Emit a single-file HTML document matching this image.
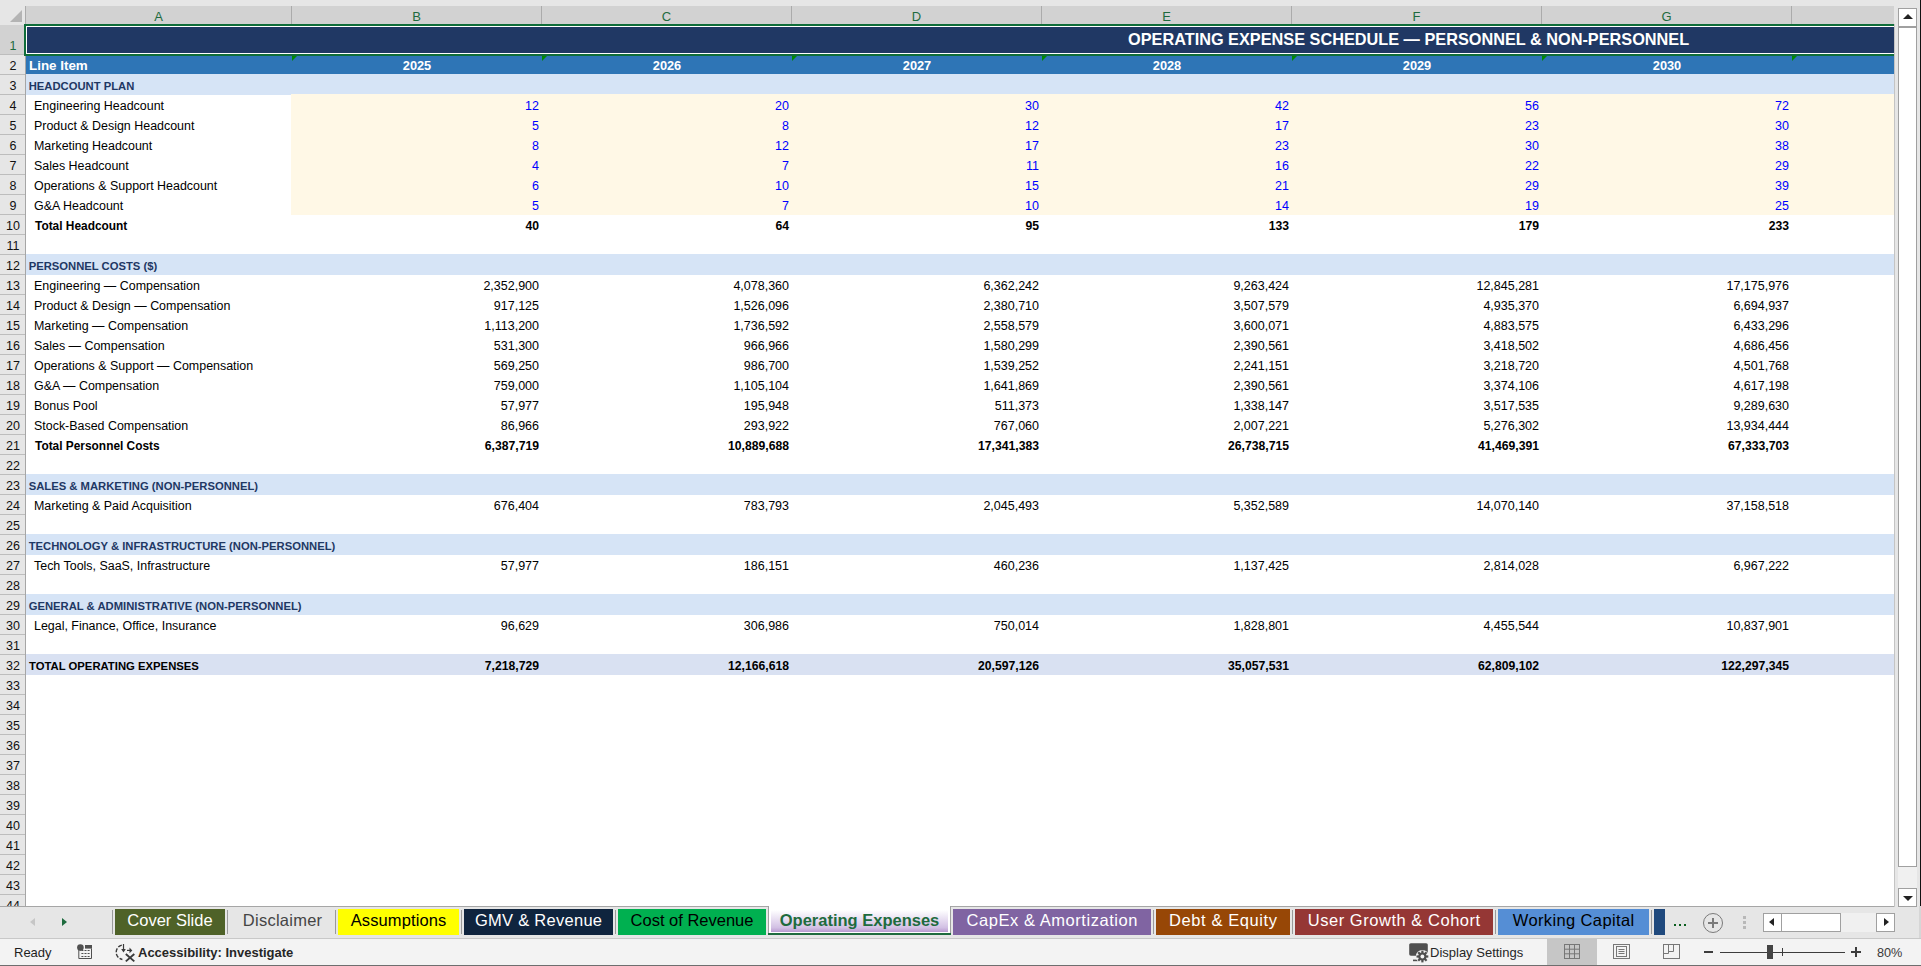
<!DOCTYPE html><html><head><meta charset="utf-8"><title>Operating Expenses</title><style>
*{box-sizing:border-box}
html,body{margin:0;padding:0}
body{width:1921px;height:966px;overflow:hidden;position:relative;background:#e6e6e6;font-family:"Liberation Sans",sans-serif;color:#000}
.a{position:absolute}
.t{position:absolute;white-space:nowrap;line-height:20px;height:20px}
.ch{position:absolute;top:6px;height:18px;background:#d2d2d2;color:#1e6b3e;font-size:13px;line-height:22px;text-align:center}
.rh{position:absolute;left:0;width:25px;padding-left:1px;height:20px;background:#e6e6e6;border-top:1px solid #bdbdbd;font-size:12.5px;line-height:22px;text-align:center;color:#111}
.n{font-size:12.5px}
.r{text-align:right}
.tab{position:absolute;top:909px;height:26px;font-size:16.5px;line-height:22px;white-space:nowrap;text-align:center}
.sep{position:absolute;top:910px;width:1px;height:24px;background:#9a9a9a}

</style></head><body>
<div class="a" style="left:0;top:6px;width:25px;height:18px;background:#e6e6e6"></div>
<div class="a" style="left:10px;top:10px;width:0;height:0;border-left:12px solid transparent;border-bottom:12px solid #b4b4b4"></div>
<div class="ch" style="left:26px;width:265px">A</div>
<div class="a" style="left:25px;top:6px;width:1px;height:18px;background:#ababab"></div>
<div class="ch" style="left:292px;width:249px">B</div>
<div class="a" style="left:291px;top:6px;width:1px;height:18px;background:#ababab"></div>
<div class="ch" style="left:542px;width:249px">C</div>
<div class="a" style="left:541px;top:6px;width:1px;height:18px;background:#ababab"></div>
<div class="ch" style="left:792px;width:249px">D</div>
<div class="a" style="left:791px;top:6px;width:1px;height:18px;background:#ababab"></div>
<div class="ch" style="left:1042px;width:249px">E</div>
<div class="a" style="left:1041px;top:6px;width:1px;height:18px;background:#ababab"></div>
<div class="ch" style="left:1292px;width:249px">F</div>
<div class="a" style="left:1291px;top:6px;width:1px;height:18px;background:#ababab"></div>
<div class="ch" style="left:1542px;width:249px">G</div>
<div class="a" style="left:1541px;top:6px;width:1px;height:18px;background:#ababab"></div>
<div class="ch" style="left:1792px;width:102px"></div>
<div class="a" style="left:1791px;top:6px;width:1px;height:18px;background:#ababab"></div>
<div class="a" style="left:26px;top:24px;width:1868px;height:882px;background:#fff"></div>
<div class="a" style="left:0;top:24px;width:25px;height:882px;background:#e6e6e6;overflow:hidden">
<div class="rh" style="top:1px;height:30px;background:#d2d2d2;border-top:none;color:#1e6b3e;line-height:42px">1</div>
<div class="rh" style="top:30px">2</div>
<div class="rh" style="top:50px">3</div>
<div class="rh" style="top:70px">4</div>
<div class="rh" style="top:90px">5</div>
<div class="rh" style="top:110px">6</div>
<div class="rh" style="top:130px">7</div>
<div class="rh" style="top:150px">8</div>
<div class="rh" style="top:170px">9</div>
<div class="rh" style="top:190px">10</div>
<div class="rh" style="top:210px">11</div>
<div class="rh" style="top:230px">12</div>
<div class="rh" style="top:250px">13</div>
<div class="rh" style="top:270px">14</div>
<div class="rh" style="top:290px">15</div>
<div class="rh" style="top:310px">16</div>
<div class="rh" style="top:330px">17</div>
<div class="rh" style="top:350px">18</div>
<div class="rh" style="top:370px">19</div>
<div class="rh" style="top:390px">20</div>
<div class="rh" style="top:410px">21</div>
<div class="rh" style="top:430px">22</div>
<div class="rh" style="top:450px">23</div>
<div class="rh" style="top:470px">24</div>
<div class="rh" style="top:490px">25</div>
<div class="rh" style="top:510px">26</div>
<div class="rh" style="top:530px">27</div>
<div class="rh" style="top:550px">28</div>
<div class="rh" style="top:570px">29</div>
<div class="rh" style="top:590px">30</div>
<div class="rh" style="top:610px">31</div>
<div class="rh" style="top:630px">32</div>
<div class="rh" style="top:650px">33</div>
<div class="rh" style="top:670px">34</div>
<div class="rh" style="top:690px">35</div>
<div class="rh" style="top:710px">36</div>
<div class="rh" style="top:730px">37</div>
<div class="rh" style="top:750px">38</div>
<div class="rh" style="top:770px">39</div>
<div class="rh" style="top:790px">40</div>
<div class="rh" style="top:810px">41</div>
<div class="rh" style="top:830px">42</div>
<div class="rh" style="top:850px">43</div>
<div class="rh" style="top:870px">44</div>
</div>
<div class="a" style="left:25px;top:24px;width:1px;height:882px;background:#a6a6a6"></div>
<div class="a" style="left:26px;top:25px;width:1868px;height:30px;background:#203864"></div>
<div class="a" style="left:26px;top:54px;width:1868px;height:20px;background:#2e75b6"></div>
<div class="a" style="left:26px;top:74px;width:1868px;height:21px;background:#d6e4f6"></div>
<div class="a" style="left:26px;top:254px;width:1868px;height:21px;background:#d6e4f6"></div>
<div class="a" style="left:26px;top:474px;width:1868px;height:21px;background:#d6e4f6"></div>
<div class="a" style="left:26px;top:534px;width:1868px;height:21px;background:#d6e4f6"></div>
<div class="a" style="left:26px;top:594px;width:1868px;height:21px;background:#d6e4f6"></div>
<div class="a" style="left:26px;top:654px;width:1868px;height:21px;background:#d9e1f2"></div>
<div class="a" style="left:291px;top:94px;width:1603px;height:121px;background:#fff8e6"></div>
<div class="a" style="left:24px;top:24px;width:1870px;height:2px;background:#0f6d3a"></div>
<div class="a" style="left:24px;top:54px;width:1870px;height:2px;background:#0f6d3a"></div>
<div class="a" style="left:24px;top:24px;width:2px;height:32px;background:#0f6d3a"></div>
<div class="a" style="left:26px;top:26px;width:1868px;height:1px;background:#fff"></div>
<div class="a" style="left:26px;top:53px;width:1868px;height:1px;background:#fff"></div>
<div class="a" style="left:26px;top:26px;width:1px;height:28px;background:#fff"></div>
<div class="t" style="left:1128px;top:29px;font-size:16.3px;font-weight:bold;color:#fff;line-height:20px">OPERATING EXPENSE SCHEDULE — PERSONNEL &amp; NON-PERSONNEL</div>
<div class="t" style="left:29px;top:56px;font-size:13.4px;font-weight:bold;color:#fff">Line Item</div>
<div class="t" style="left:292px;width:250px;top:56px;font-size:12.8px;font-weight:bold;color:#fff;text-align:center">2025</div>
<div class="t" style="left:542px;width:250px;top:56px;font-size:12.8px;font-weight:bold;color:#fff;text-align:center">2026</div>
<div class="t" style="left:792px;width:250px;top:56px;font-size:12.8px;font-weight:bold;color:#fff;text-align:center">2027</div>
<div class="t" style="left:1042px;width:250px;top:56px;font-size:12.8px;font-weight:bold;color:#fff;text-align:center">2028</div>
<div class="t" style="left:1292px;width:250px;top:56px;font-size:12.8px;font-weight:bold;color:#fff;text-align:center">2029</div>
<div class="t" style="left:1542px;width:250px;top:56px;font-size:12.8px;font-weight:bold;color:#fff;text-align:center">2030</div>
<div class="a" style="left:292px;top:56px;width:0;height:0;border-top:5px solid #008a00;border-right:5px solid transparent"></div>
<div class="a" style="left:542px;top:56px;width:0;height:0;border-top:5px solid #008a00;border-right:5px solid transparent"></div>
<div class="a" style="left:792px;top:56px;width:0;height:0;border-top:5px solid #008a00;border-right:5px solid transparent"></div>
<div class="a" style="left:1042px;top:56px;width:0;height:0;border-top:5px solid #008a00;border-right:5px solid transparent"></div>
<div class="a" style="left:1292px;top:56px;width:0;height:0;border-top:5px solid #008a00;border-right:5px solid transparent"></div>
<div class="a" style="left:1542px;top:56px;width:0;height:0;border-top:5px solid #008a00;border-right:5px solid transparent"></div>
<div class="a" style="left:1792px;top:56px;width:0;height:0;border-top:5px solid #008a00;border-right:5px solid transparent"></div>
<div class="t" style="left:28.7px;top:76px;font-size:11.25px;font-weight:bold;color:#1f3864">HEADCOUNT PLAN</div>
<div class="t" style="left:34px;top:96px;font-size:12.45px">Engineering Headcount</div>
<div class="t r" style="left:341px;width:198px;top:96px;font-size:12.5px;color:#0000ff">12</div>
<div class="t r" style="left:591px;width:198px;top:96px;font-size:12.5px;color:#0000ff">20</div>
<div class="t r" style="left:841px;width:198px;top:96px;font-size:12.5px;color:#0000ff">30</div>
<div class="t r" style="left:1091px;width:198px;top:96px;font-size:12.5px;color:#0000ff">42</div>
<div class="t r" style="left:1341px;width:198px;top:96px;font-size:12.5px;color:#0000ff">56</div>
<div class="t r" style="left:1591px;width:198px;top:96px;font-size:12.5px;color:#0000ff">72</div>
<div class="t" style="left:34px;top:116px;font-size:12.45px">Product &amp; Design Headcount</div>
<div class="t r" style="left:341px;width:198px;top:116px;font-size:12.5px;color:#0000ff">5</div>
<div class="t r" style="left:591px;width:198px;top:116px;font-size:12.5px;color:#0000ff">8</div>
<div class="t r" style="left:841px;width:198px;top:116px;font-size:12.5px;color:#0000ff">12</div>
<div class="t r" style="left:1091px;width:198px;top:116px;font-size:12.5px;color:#0000ff">17</div>
<div class="t r" style="left:1341px;width:198px;top:116px;font-size:12.5px;color:#0000ff">23</div>
<div class="t r" style="left:1591px;width:198px;top:116px;font-size:12.5px;color:#0000ff">30</div>
<div class="t" style="left:34px;top:136px;font-size:12.45px">Marketing Headcount</div>
<div class="t r" style="left:341px;width:198px;top:136px;font-size:12.5px;color:#0000ff">8</div>
<div class="t r" style="left:591px;width:198px;top:136px;font-size:12.5px;color:#0000ff">12</div>
<div class="t r" style="left:841px;width:198px;top:136px;font-size:12.5px;color:#0000ff">17</div>
<div class="t r" style="left:1091px;width:198px;top:136px;font-size:12.5px;color:#0000ff">23</div>
<div class="t r" style="left:1341px;width:198px;top:136px;font-size:12.5px;color:#0000ff">30</div>
<div class="t r" style="left:1591px;width:198px;top:136px;font-size:12.5px;color:#0000ff">38</div>
<div class="t" style="left:34px;top:156px;font-size:12.45px">Sales Headcount</div>
<div class="t r" style="left:341px;width:198px;top:156px;font-size:12.5px;color:#0000ff">4</div>
<div class="t r" style="left:591px;width:198px;top:156px;font-size:12.5px;color:#0000ff">7</div>
<div class="t r" style="left:841px;width:198px;top:156px;font-size:12.5px;color:#0000ff">11</div>
<div class="t r" style="left:1091px;width:198px;top:156px;font-size:12.5px;color:#0000ff">16</div>
<div class="t r" style="left:1341px;width:198px;top:156px;font-size:12.5px;color:#0000ff">22</div>
<div class="t r" style="left:1591px;width:198px;top:156px;font-size:12.5px;color:#0000ff">29</div>
<div class="t" style="left:34px;top:176px;font-size:12.45px">Operations &amp; Support Headcount</div>
<div class="t r" style="left:341px;width:198px;top:176px;font-size:12.5px;color:#0000ff">6</div>
<div class="t r" style="left:591px;width:198px;top:176px;font-size:12.5px;color:#0000ff">10</div>
<div class="t r" style="left:841px;width:198px;top:176px;font-size:12.5px;color:#0000ff">15</div>
<div class="t r" style="left:1091px;width:198px;top:176px;font-size:12.5px;color:#0000ff">21</div>
<div class="t r" style="left:1341px;width:198px;top:176px;font-size:12.5px;color:#0000ff">29</div>
<div class="t r" style="left:1591px;width:198px;top:176px;font-size:12.5px;color:#0000ff">39</div>
<div class="t" style="left:34px;top:196px;font-size:12.45px">G&amp;A Headcount</div>
<div class="t r" style="left:341px;width:198px;top:196px;font-size:12.5px;color:#0000ff">5</div>
<div class="t r" style="left:591px;width:198px;top:196px;font-size:12.5px;color:#0000ff">7</div>
<div class="t r" style="left:841px;width:198px;top:196px;font-size:12.5px;color:#0000ff">10</div>
<div class="t r" style="left:1091px;width:198px;top:196px;font-size:12.5px;color:#0000ff">14</div>
<div class="t r" style="left:1341px;width:198px;top:196px;font-size:12.5px;color:#0000ff">19</div>
<div class="t r" style="left:1591px;width:198px;top:196px;font-size:12.5px;color:#0000ff">25</div>
<div class="t" style="left:35px;top:216px;font-size:11.9px;font-weight:bold">Total Headcount</div>
<div class="t r" style="left:341px;width:198px;top:216px;font-size:12.2px;font-weight:bold">40</div>
<div class="t r" style="left:591px;width:198px;top:216px;font-size:12.2px;font-weight:bold">64</div>
<div class="t r" style="left:841px;width:198px;top:216px;font-size:12.2px;font-weight:bold">95</div>
<div class="t r" style="left:1091px;width:198px;top:216px;font-size:12.2px;font-weight:bold">133</div>
<div class="t r" style="left:1341px;width:198px;top:216px;font-size:12.2px;font-weight:bold">179</div>
<div class="t r" style="left:1591px;width:198px;top:216px;font-size:12.2px;font-weight:bold">233</div>
<div class="t" style="left:28.7px;top:256px;font-size:11.25px;font-weight:bold;color:#1f3864">PERSONNEL COSTS ($)</div>
<div class="t" style="left:34px;top:276px;font-size:12.45px">Engineering — Compensation</div>
<div class="t r" style="left:341px;width:198px;top:276px;font-size:12.5px">2,352,900</div>
<div class="t r" style="left:591px;width:198px;top:276px;font-size:12.5px">4,078,360</div>
<div class="t r" style="left:841px;width:198px;top:276px;font-size:12.5px">6,362,242</div>
<div class="t r" style="left:1091px;width:198px;top:276px;font-size:12.5px">9,263,424</div>
<div class="t r" style="left:1341px;width:198px;top:276px;font-size:12.5px">12,845,281</div>
<div class="t r" style="left:1591px;width:198px;top:276px;font-size:12.5px">17,175,976</div>
<div class="t" style="left:34px;top:296px;font-size:12.45px">Product &amp; Design — Compensation</div>
<div class="t r" style="left:341px;width:198px;top:296px;font-size:12.5px">917,125</div>
<div class="t r" style="left:591px;width:198px;top:296px;font-size:12.5px">1,526,096</div>
<div class="t r" style="left:841px;width:198px;top:296px;font-size:12.5px">2,380,710</div>
<div class="t r" style="left:1091px;width:198px;top:296px;font-size:12.5px">3,507,579</div>
<div class="t r" style="left:1341px;width:198px;top:296px;font-size:12.5px">4,935,370</div>
<div class="t r" style="left:1591px;width:198px;top:296px;font-size:12.5px">6,694,937</div>
<div class="t" style="left:34px;top:316px;font-size:12.45px">Marketing — Compensation</div>
<div class="t r" style="left:341px;width:198px;top:316px;font-size:12.5px">1,113,200</div>
<div class="t r" style="left:591px;width:198px;top:316px;font-size:12.5px">1,736,592</div>
<div class="t r" style="left:841px;width:198px;top:316px;font-size:12.5px">2,558,579</div>
<div class="t r" style="left:1091px;width:198px;top:316px;font-size:12.5px">3,600,071</div>
<div class="t r" style="left:1341px;width:198px;top:316px;font-size:12.5px">4,883,575</div>
<div class="t r" style="left:1591px;width:198px;top:316px;font-size:12.5px">6,433,296</div>
<div class="t" style="left:34px;top:336px;font-size:12.45px">Sales — Compensation</div>
<div class="t r" style="left:341px;width:198px;top:336px;font-size:12.5px">531,300</div>
<div class="t r" style="left:591px;width:198px;top:336px;font-size:12.5px">966,966</div>
<div class="t r" style="left:841px;width:198px;top:336px;font-size:12.5px">1,580,299</div>
<div class="t r" style="left:1091px;width:198px;top:336px;font-size:12.5px">2,390,561</div>
<div class="t r" style="left:1341px;width:198px;top:336px;font-size:12.5px">3,418,502</div>
<div class="t r" style="left:1591px;width:198px;top:336px;font-size:12.5px">4,686,456</div>
<div class="t" style="left:34px;top:356px;font-size:12.45px">Operations &amp; Support — Compensation</div>
<div class="t r" style="left:341px;width:198px;top:356px;font-size:12.5px">569,250</div>
<div class="t r" style="left:591px;width:198px;top:356px;font-size:12.5px">986,700</div>
<div class="t r" style="left:841px;width:198px;top:356px;font-size:12.5px">1,539,252</div>
<div class="t r" style="left:1091px;width:198px;top:356px;font-size:12.5px">2,241,151</div>
<div class="t r" style="left:1341px;width:198px;top:356px;font-size:12.5px">3,218,720</div>
<div class="t r" style="left:1591px;width:198px;top:356px;font-size:12.5px">4,501,768</div>
<div class="t" style="left:34px;top:376px;font-size:12.45px">G&amp;A — Compensation</div>
<div class="t r" style="left:341px;width:198px;top:376px;font-size:12.5px">759,000</div>
<div class="t r" style="left:591px;width:198px;top:376px;font-size:12.5px">1,105,104</div>
<div class="t r" style="left:841px;width:198px;top:376px;font-size:12.5px">1,641,869</div>
<div class="t r" style="left:1091px;width:198px;top:376px;font-size:12.5px">2,390,561</div>
<div class="t r" style="left:1341px;width:198px;top:376px;font-size:12.5px">3,374,106</div>
<div class="t r" style="left:1591px;width:198px;top:376px;font-size:12.5px">4,617,198</div>
<div class="t" style="left:34px;top:396px;font-size:12.45px">Bonus Pool</div>
<div class="t r" style="left:341px;width:198px;top:396px;font-size:12.5px">57,977</div>
<div class="t r" style="left:591px;width:198px;top:396px;font-size:12.5px">195,948</div>
<div class="t r" style="left:841px;width:198px;top:396px;font-size:12.5px">511,373</div>
<div class="t r" style="left:1091px;width:198px;top:396px;font-size:12.5px">1,338,147</div>
<div class="t r" style="left:1341px;width:198px;top:396px;font-size:12.5px">3,517,535</div>
<div class="t r" style="left:1591px;width:198px;top:396px;font-size:12.5px">9,289,630</div>
<div class="t" style="left:34px;top:416px;font-size:12.45px">Stock-Based Compensation</div>
<div class="t r" style="left:341px;width:198px;top:416px;font-size:12.5px">86,966</div>
<div class="t r" style="left:591px;width:198px;top:416px;font-size:12.5px">293,922</div>
<div class="t r" style="left:841px;width:198px;top:416px;font-size:12.5px">767,060</div>
<div class="t r" style="left:1091px;width:198px;top:416px;font-size:12.5px">2,007,221</div>
<div class="t r" style="left:1341px;width:198px;top:416px;font-size:12.5px">5,276,302</div>
<div class="t r" style="left:1591px;width:198px;top:416px;font-size:12.5px">13,934,444</div>
<div class="t" style="left:35px;top:436px;font-size:11.9px;font-weight:bold">Total Personnel Costs</div>
<div class="t r" style="left:341px;width:198px;top:436px;font-size:12.2px;font-weight:bold">6,387,719</div>
<div class="t r" style="left:591px;width:198px;top:436px;font-size:12.2px;font-weight:bold">10,889,688</div>
<div class="t r" style="left:841px;width:198px;top:436px;font-size:12.2px;font-weight:bold">17,341,383</div>
<div class="t r" style="left:1091px;width:198px;top:436px;font-size:12.2px;font-weight:bold">26,738,715</div>
<div class="t r" style="left:1341px;width:198px;top:436px;font-size:12.2px;font-weight:bold">41,469,391</div>
<div class="t r" style="left:1591px;width:198px;top:436px;font-size:12.2px;font-weight:bold">67,333,703</div>
<div class="t" style="left:28.7px;top:476px;font-size:11.25px;font-weight:bold;color:#1f3864">SALES &amp; MARKETING (NON-PERSONNEL)</div>
<div class="t" style="left:34px;top:496px;font-size:12.45px">Marketing &amp; Paid Acquisition</div>
<div class="t r" style="left:341px;width:198px;top:496px;font-size:12.5px">676,404</div>
<div class="t r" style="left:591px;width:198px;top:496px;font-size:12.5px">783,793</div>
<div class="t r" style="left:841px;width:198px;top:496px;font-size:12.5px">2,045,493</div>
<div class="t r" style="left:1091px;width:198px;top:496px;font-size:12.5px">5,352,589</div>
<div class="t r" style="left:1341px;width:198px;top:496px;font-size:12.5px">14,070,140</div>
<div class="t r" style="left:1591px;width:198px;top:496px;font-size:12.5px">37,158,518</div>
<div class="t" style="left:28.7px;top:536px;font-size:11.25px;font-weight:bold;color:#1f3864">TECHNOLOGY &amp; INFRASTRUCTURE (NON-PERSONNEL)</div>
<div class="t" style="left:34px;top:556px;font-size:12.45px">Tech Tools, SaaS, Infrastructure</div>
<div class="t r" style="left:341px;width:198px;top:556px;font-size:12.5px">57,977</div>
<div class="t r" style="left:591px;width:198px;top:556px;font-size:12.5px">186,151</div>
<div class="t r" style="left:841px;width:198px;top:556px;font-size:12.5px">460,236</div>
<div class="t r" style="left:1091px;width:198px;top:556px;font-size:12.5px">1,137,425</div>
<div class="t r" style="left:1341px;width:198px;top:556px;font-size:12.5px">2,814,028</div>
<div class="t r" style="left:1591px;width:198px;top:556px;font-size:12.5px">6,967,222</div>
<div class="t" style="left:28.7px;top:596px;font-size:11.25px;font-weight:bold;color:#1f3864">GENERAL &amp; ADMINISTRATIVE (NON-PERSONNEL)</div>
<div class="t" style="left:34px;top:616px;font-size:12.45px">Legal, Finance, Office, Insurance</div>
<div class="t r" style="left:341px;width:198px;top:616px;font-size:12.5px">96,629</div>
<div class="t r" style="left:591px;width:198px;top:616px;font-size:12.5px">306,986</div>
<div class="t r" style="left:841px;width:198px;top:616px;font-size:12.5px">750,014</div>
<div class="t r" style="left:1091px;width:198px;top:616px;font-size:12.5px">1,828,801</div>
<div class="t r" style="left:1341px;width:198px;top:616px;font-size:12.5px">4,455,544</div>
<div class="t r" style="left:1591px;width:198px;top:616px;font-size:12.5px">10,837,901</div>
<div class="t" style="left:29px;top:656px;font-size:11.3px;font-weight:bold">TOTAL OPERATING EXPENSES</div>
<div class="t r" style="left:341px;width:198px;top:656px;font-size:12.2px;font-weight:bold">7,218,729</div>
<div class="t r" style="left:591px;width:198px;top:656px;font-size:12.2px;font-weight:bold">12,166,618</div>
<div class="t r" style="left:841px;width:198px;top:656px;font-size:12.2px;font-weight:bold">20,597,126</div>
<div class="t r" style="left:1091px;width:198px;top:656px;font-size:12.2px;font-weight:bold">35,057,531</div>
<div class="t r" style="left:1341px;width:198px;top:656px;font-size:12.2px;font-weight:bold">62,809,102</div>
<div class="t r" style="left:1591px;width:198px;top:656px;font-size:12.2px;font-weight:bold">122,297,345</div>
<div class="a" style="left:0;top:906px;width:1894px;height:1px;background:#a6a6a6"></div>
<div class="a" style="left:1894px;top:24px;width:1px;height:883px;background:#c4c4c4"></div>
<div class="a" style="left:1898px;top:8px;width:19px;height:19px;background:#fff;border:1px solid #a0a0a0"></div>
<div class="a" style="left:1903px;top:14px;width:0;height:0;border-left:5px solid transparent;border-right:5px solid transparent;border-bottom:5px solid #222"></div>
<div class="a" style="left:1898px;top:27px;width:19px;height:840px;background:#fff;border:1px solid #a0a0a0"></div>
<div class="a" style="left:1898px;top:867px;width:19px;height:21px;background:#f0f0f0"></div>
<div class="a" style="left:1898px;top:888px;width:19px;height:19px;background:#fff;border:1px solid #a0a0a0"></div>
<div class="a" style="left:1903px;top:896px;width:0;height:0;border-left:5px solid transparent;border-right:5px solid transparent;border-top:5px solid #222"></div>
<div class="a" style="left:1920px;top:0;width:1px;height:906px;background:#111"></div>
<div class="a" style="left:1919px;top:906px;width:2px;height:60px;background:#d6d6d6"></div>
<div class="a" style="left:0;top:938px;width:1921px;height:1px;background:#c8c8c8"></div>
<div class="a" style="left:30px;top:918px;width:0;height:0;border-top:4.5px solid transparent;border-bottom:4.5px solid transparent;border-right:5px solid #c6c6c6"></div>
<div class="a" style="left:62px;top:918px;width:0;height:0;border-top:4.5px solid transparent;border-bottom:4.5px solid transparent;border-left:5px solid #1e6b3e"></div>
<div class="tab" style="left:115px;width:110px;background:#4f6228;color:#ffffff;letter-spacing:0px;text-indent:0px">Cover Slide</div>
<div class="tab" style="left:229px;width:107px;color:#444444;letter-spacing:0.25px;text-indent:0.25px">Disclaimer</div>
<div class="tab" style="left:338px;width:121px;background:#ffff00;color:#000000;letter-spacing:0.1px;text-indent:0.1px">Assumptions</div>
<div class="tab" style="left:464px;width:149px;background:#0f243e;color:#ffffff;letter-spacing:0.27px;text-indent:0.27px">GMV &amp; Revenue</div>
<div class="tab" style="left:618px;width:148px;background:#00b050;color:#000000;letter-spacing:0px;text-indent:0px">Cost of Revenue</div>
<div class="tab" style="left:953px;width:198px;background:#8064a2;color:#ffffff;letter-spacing:0.55px;text-indent:0.55px">CapEx &amp; Amortization</div>
<div class="tab" style="left:1156px;width:134px;background:#974706;color:#ffffff;letter-spacing:0.6px;text-indent:0.6px">Debt &amp; Equity</div>
<div class="tab" style="left:1295px;width:198px;background:#953735;color:#ffffff;letter-spacing:0.53px;text-indent:0.53px">User Growth &amp; Cohort</div>
<div class="tab" style="left:1498px;width:151px;background:#558ed5;color:#000000;letter-spacing:0.37px;text-indent:0.37px">Working Capital</div>
<div class="sep" style="left:112px"></div>
<div class="sep" style="left:227px"></div>
<div class="sep" style="left:335px"></div>
<div class="sep" style="left:461px"></div>
<div class="sep" style="left:615px"></div>
<div class="sep" style="left:1153px"></div>
<div class="sep" style="left:1292px"></div>
<div class="sep" style="left:1495px"></div>
<div class="sep" style="left:1651px"></div>
<div class="a" style="left:768px;top:906px;width:183px;height:29px;background:#fff;border-left:1px solid #a0a0a0;border-right:1px solid #a0a0a0"></div>
<div class="a" style="left:771px;top:910px;width:177px;height:22px;background:linear-gradient(#ffffff 0%,#e9e0f2 40%,#d2c0e4 80%,#b89ad0 100%)"></div>
<div class="a" style="left:768px;top:933px;width:183px;height:2px;background:#1e6b3e"></div>
<div class="tab" style="left:769px;width:181px;top:909px;color:#1e6b3e;font-weight:bold">Operating Expenses</div>
<div class="a" style="left:1654px;top:909px;width:11px;height:26px;background:#1f497d"></div>
<div class="a" style="left:1674px;top:924px;width:2px;height:2px;background:#0a5e1e"></div>
<div class="a" style="left:1679px;top:924px;width:2px;height:2px;background:#0a5e1e"></div>
<div class="a" style="left:1684px;top:924px;width:2px;height:2px;background:#0a5e1e"></div>
<div class="a" style="left:1703px;top:913px;width:20px;height:20px;border:1.3px solid #7a7a7a;border-radius:50%"></div>
<div class="a" style="left:1708px;top:922px;width:10px;height:2px;background:#7a7a7a"></div>
<div class="a" style="left:1712px;top:918px;width:2px;height:10px;background:#7a7a7a"></div>
<div class="a" style="left:1743px;top:916px;width:3px;height:3px;background:#b8b8b8"></div>
<div class="a" style="left:1743px;top:921px;width:3px;height:3px;background:#b8b8b8"></div>
<div class="a" style="left:1743px;top:926px;width:3px;height:3px;background:#b8b8b8"></div>
<div class="a" style="left:1763px;top:913px;width:131px;height:19px;background:#f0f0f0"></div>
<div class="a" style="left:1763px;top:913px;width:19px;height:19px;background:#fff;border:1px solid #a0a0a0"></div>
<div class="a" style="left:1769px;top:918px;width:0;height:0;border-top:4.5px solid transparent;border-bottom:4.5px solid transparent;border-right:5px solid #222"></div>
<div class="a" style="left:1781px;top:913px;width:60px;height:19px;background:#fff;border:1px solid #a0a0a0"></div>
<div class="a" style="left:1876px;top:913px;width:19px;height:19px;background:#fff;border:1px solid #a0a0a0"></div>
<div class="a" style="left:1884px;top:918px;width:0;height:0;border-top:4.5px solid transparent;border-bottom:4.5px solid transparent;border-left:5px solid #222"></div>
<div class="a" style="left:0;top:939px;width:1921px;height:27px;background:#f3f3f3"></div>
<div class="a" style="left:0;top:965px;width:1921px;height:1px;background:#6e6e6e"></div>
<div class="a" style="left:14px;top:943px;font-size:13px;line-height:20px;color:#1e1e1e">Ready</div>
<svg class="a" style="left:76px;top:943px" width="18" height="17" viewBox="76 943 18 17"><g fill="#505050"><circle cx="80.4" cy="947.6" r="3.3"/><rect x="85" y="945" width="7" height="3.6"/><rect x="81.4" y="950" width="2" height="1"/><rect x="84.5" y="950" width="2" height="1"/><rect x="87.6" y="950" width="2" height="1"/><rect x="81.4" y="953" width="2" height="1"/><rect x="84.5" y="953" width="2" height="1"/><rect x="87.6" y="953" width="2" height="1"/><rect x="81.4" y="956" width="2" height="1"/><rect x="84.5" y="956" width="2" height="1"/><rect x="87.6" y="956" width="2" height="1"/></g><path d="M78.8 949.5V958.5H91.5V948.5" fill="none" stroke="#505050" stroke-width="1"/></svg>
<svg class="a" style="left:110px;top:940px" width="30" height="26" viewBox="110 940 30 26"><path d="M121.8 945.1 A7.35 7.35 0 0 0 122.4 959.5" fill="none" stroke="#3a3a3a" stroke-width="1.4" stroke-dasharray="4 1.6"/><path d="M123.5 944V951" fill="none" stroke="#3a3a3a" stroke-width="1.2"/><path d="M121.2 949H125.8L123.5 952.6Z" fill="#3a3a3a"/><path d="M127 950.4H130" fill="none" stroke="#3a3a3a" stroke-width="1.2"/><path d="M129.5 947.6V953.2L132.3 950.4Z" fill="#3a3a3a"/><path d="M125.8 954L134.3 961.4M125.8 961.4L134.3 954" fill="none" stroke="#3a3a3a" stroke-width="1.9"/></svg>
<div class="a" style="left:138px;top:943px;font-size:13px;line-height:20px;font-weight:bold;color:#262626">Accessibility: Investigate</div>
<svg class="a" style="left:1405px;top:940px" width="28" height="26" viewBox="1405 940 28 26"><rect x="1409.2" y="943.2" width="18.6" height="12.5" rx="1.6" fill="#4f4f4f"/><rect x="1413" y="959.6" width="4.8" height="1.6" fill="#4f4f4f"/><circle cx="1422.4" cy="956.5" r="6.6" fill="#f3f3f3"/><g fill="#4f4f4f"><circle cx="1422.4" cy="956.5" r="4.1"/><rect x="1421.3" y="950.6" width="2.2" height="3" transform="rotate(0 1422.4 956.5)"/><rect x="1421.3" y="950.6" width="2.2" height="3" transform="rotate(45 1422.4 956.5)"/><rect x="1421.3" y="950.6" width="2.2" height="3" transform="rotate(90 1422.4 956.5)"/><rect x="1421.3" y="950.6" width="2.2" height="3" transform="rotate(135 1422.4 956.5)"/><rect x="1421.3" y="950.6" width="2.2" height="3" transform="rotate(180 1422.4 956.5)"/><rect x="1421.3" y="950.6" width="2.2" height="3" transform="rotate(225 1422.4 956.5)"/><rect x="1421.3" y="950.6" width="2.2" height="3" transform="rotate(270 1422.4 956.5)"/><rect x="1421.3" y="950.6" width="2.2" height="3" transform="rotate(315 1422.4 956.5)"/></g><circle cx="1422.4" cy="956.5" r="1.9" fill="#f3f3f3"/></svg>
<div class="a" style="left:1430px;top:943px;font-size:13px;line-height:20px;color:#262626">Display Settings</div>
<div class="a" style="left:1547px;top:939px;width:50px;height:26px;background:#c6c6c6"></div>
<svg class="a" style="left:1563px;top:943px" width="18" height="17" viewBox="0 0 18 17"><g fill="none" stroke="#777" stroke-width="1"><rect x="1.5" y="1.5" width="15" height="14"/><path d="M6.5 1.5V15.5M11.5 1.5V15.5M1.5 6.2H16.5M1.5 10.8H16.5"/></g></svg>
<svg class="a" style="left:1612px;top:943px" width="19" height="17" viewBox="0 0 19 17"><g fill="none" stroke="#777" stroke-width="1"><rect x="1.5" y="1.5" width="16" height="14"/><rect x="4.5" y="3.5" width="10" height="10"/><path d="M6.5 6.5H12.5M6.5 8.5H12.5M6.5 10.5H12.5"/></g></svg>
<svg class="a" style="left:1662px;top:943px" width="19" height="17" viewBox="0 0 19 17"><g fill="none" stroke="#777" stroke-width="1"><rect x="1.5" y="1.5" width="16" height="14"/><path d="M6.5 1.5V10.5H1.5M11.5 1.5V8.5H6.5"/></g></svg>
<div class="a" style="left:1704px;top:951px;width:9px;height:1.5px;background:#3c3c3c"></div>
<div class="a" style="left:1720px;top:951.5px;width:125px;height:1.3px;background:#3c3c3c"></div>
<div class="a" style="left:1767px;top:945px;width:6px;height:14px;background:#444"></div>
<div class="a" style="left:1782px;top:948px;width:1px;height:8px;background:#3c3c3c"></div>
<div class="a" style="left:1851px;top:951px;width:9.5px;height:1.5px;background:#3c3c3c"></div>
<div class="a" style="left:1855px;top:946.5px;width:1.5px;height:10px;background:#3c3c3c"></div>
<div class="a" style="left:1877px;top:943px;font-size:12.7px;line-height:20px;color:#3a3a3a">80%</div>
</body></html>
